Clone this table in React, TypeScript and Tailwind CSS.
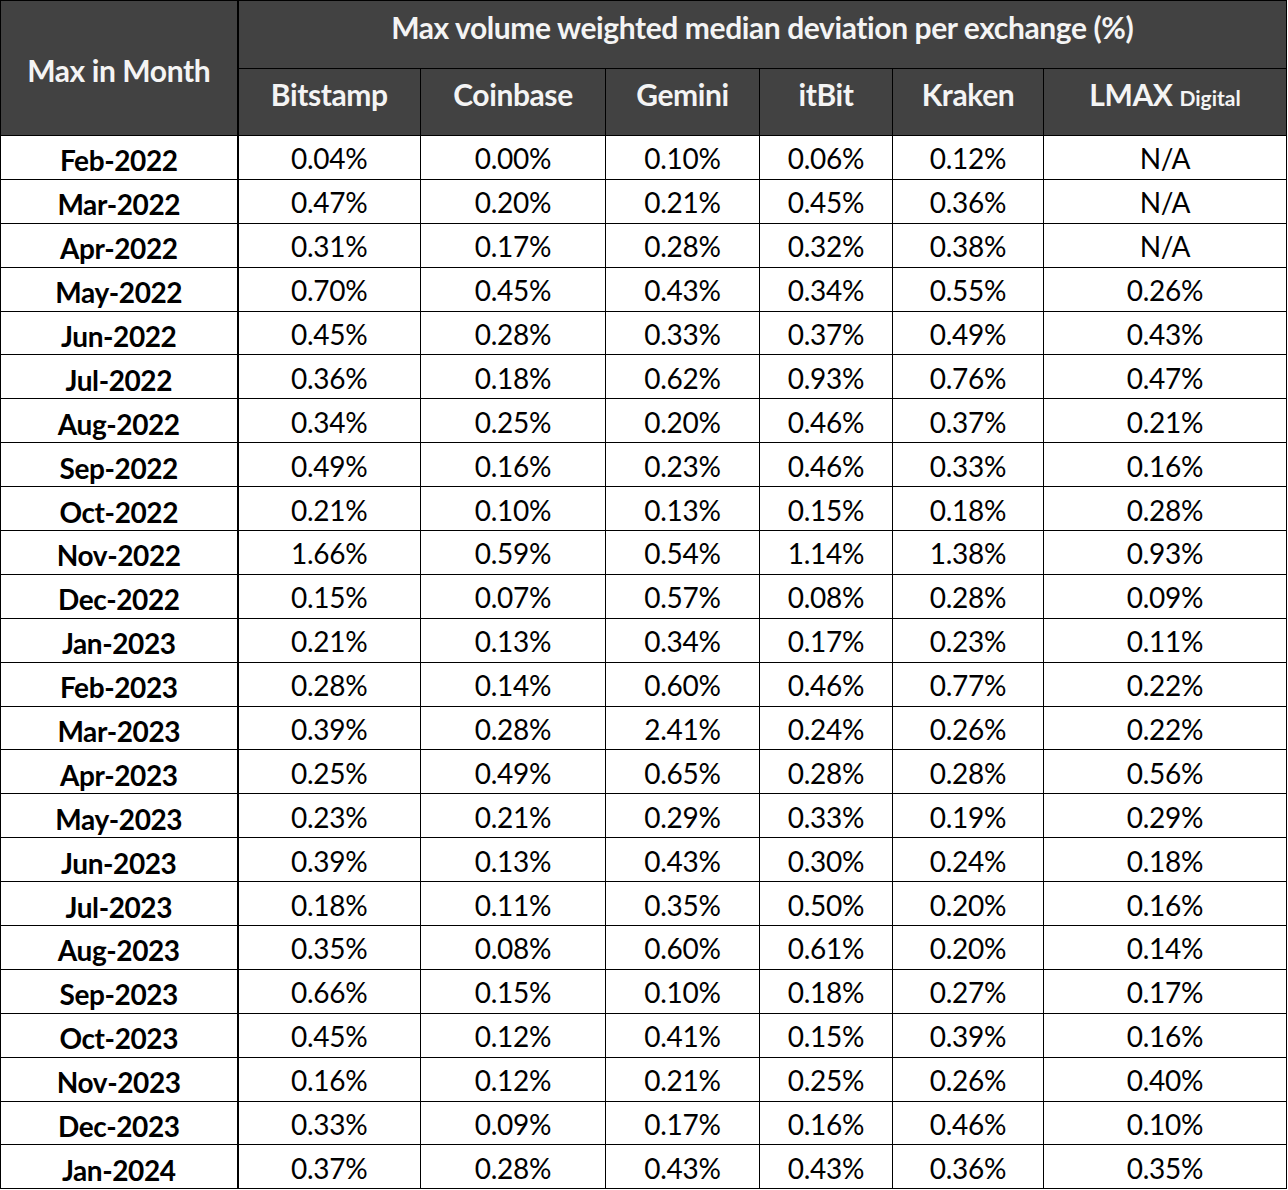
const exchanges = ['Bitstamp', 'Coinbase', 'Gemini', 'itBit', 'Kraken']

const rows: [string, string[]][] = [
  ['Feb-2022', ['0.04%', '0.00%', '0.10%', '0.06%', '0.12%', 'N/A']],
  ['Mar-2022', ['0.47%', '0.20%', '0.21%', '0.45%', '0.36%', 'N/A']],
  ['Apr-2022', ['0.31%', '0.17%', '0.28%', '0.32%', '0.38%', 'N/A']],
  ['May-2022', ['0.70%', '0.45%', '0.43%', '0.34%', '0.55%', '0.26%']],
  ['Jun-2022', ['0.45%', '0.28%', '0.33%', '0.37%', '0.49%', '0.43%']],
  ['Jul-2022', ['0.36%', '0.18%', '0.62%', '0.93%', '0.76%', '0.47%']],
  ['Aug-2022', ['0.34%', '0.25%', '0.20%', '0.46%', '0.37%', '0.21%']],
  ['Sep-2022', ['0.49%', '0.16%', '0.23%', '0.46%', '0.33%', '0.16%']],
  ['Oct-2022', ['0.21%', '0.10%', '0.13%', '0.15%', '0.18%', '0.28%']],
  ['Nov-2022', ['1.66%', '0.59%', '0.54%', '1.14%', '1.38%', '0.93%']],
  ['Dec-2022', ['0.15%', '0.07%', '0.57%', '0.08%', '0.28%', '0.09%']],
  ['Jan-2023', ['0.21%', '0.13%', '0.34%', '0.17%', '0.23%', '0.11%']],
  ['Feb-2023', ['0.28%', '0.14%', '0.60%', '0.46%', '0.77%', '0.22%']],
  ['Mar-2023', ['0.39%', '0.28%', '2.41%', '0.24%', '0.26%', '0.22%']],
  ['Apr-2023', ['0.25%', '0.49%', '0.65%', '0.28%', '0.28%', '0.56%']],
  ['May-2023', ['0.23%', '0.21%', '0.29%', '0.33%', '0.19%', '0.29%']],
  ['Jun-2023', ['0.39%', '0.13%', '0.43%', '0.30%', '0.24%', '0.18%']],
  ['Jul-2023', ['0.18%', '0.11%', '0.35%', '0.50%', '0.20%', '0.16%']],
  ['Aug-2023', ['0.35%', '0.08%', '0.60%', '0.61%', '0.20%', '0.14%']],
  ['Sep-2023', ['0.66%', '0.15%', '0.10%', '0.18%', '0.27%', '0.17%']],
  ['Oct-2023', ['0.45%', '0.12%', '0.41%', '0.15%', '0.39%', '0.16%']],
  ['Nov-2023', ['0.16%', '0.12%', '0.21%', '0.25%', '0.26%', '0.40%']],
  ['Dec-2023', ['0.33%', '0.09%', '0.17%', '0.16%', '0.46%', '0.10%']],
  ['Jan-2024', ['0.37%', '0.28%', '0.43%', '0.43%', '0.36%', '0.35%']],
]

const cell = 'border border-black p-0 text-center align-middle leading-none'

export default function App() {
  return (
    <div className="w-[1288px] bg-white font-['Lato','Liberation_Sans',sans-serif] text-black">
      <table className="w-[1286px] table-fixed border-collapse">
        <colgroup>
          <col className="w-[237px]" />
          <col className="w-[183px]" />
          <col className="w-[185px]" />
          <col className="w-[154px]" />
          <col className="w-[133px]" />
          <col className="w-[151px]" />
          <col className="w-[243px]" />
        </colgroup>
        <thead className="bg-[#424242] font-bold text-[#f4f4f4]">
          <tr className="h-[68px]">
            <th rowSpan={2} className={`${cell} border-r-2 pt-1 text-[30px] tracking-[-0.4px]`}>
              Max in Month
            </th>
            <th colSpan={6} className={`${cell} pb-4 text-[30px] tracking-[-0.4px]`}>
              Max volume weighted median deviation per exchange (%)
            </th>
          </tr>
          <tr className="h-[67px]">
            {exchanges.map((e) => (
              <th key={e} className={`${cell} pb-4 text-[30px] tracking-[-0.4px]`}>
                {e}
              </th>
            ))}
            <th className={`${cell} pb-4 text-[30px] tracking-[-0.4px]`}>
              LMAX <span className="text-[21px] tracking-normal">Digital</span>
            </th>
          </tr>
        </thead>
        <tbody>
          {rows.map(([month, vals]) => (
            <tr key={month} className="h-[43.9px]">
              <td className={`${cell} border-r-2 pt-1.5 text-[28px] font-bold tracking-[-0.4px]`}>
                {month}
              </td>
              {vals.map((v, i) => (
                <td key={i} className={`${cell} pt-0.5 text-[28px] tracking-[-0.3px]`}>
                  {v}
                </td>
              ))}
            </tr>
          ))}
        </tbody>
      </table>
    </div>
  )
}
